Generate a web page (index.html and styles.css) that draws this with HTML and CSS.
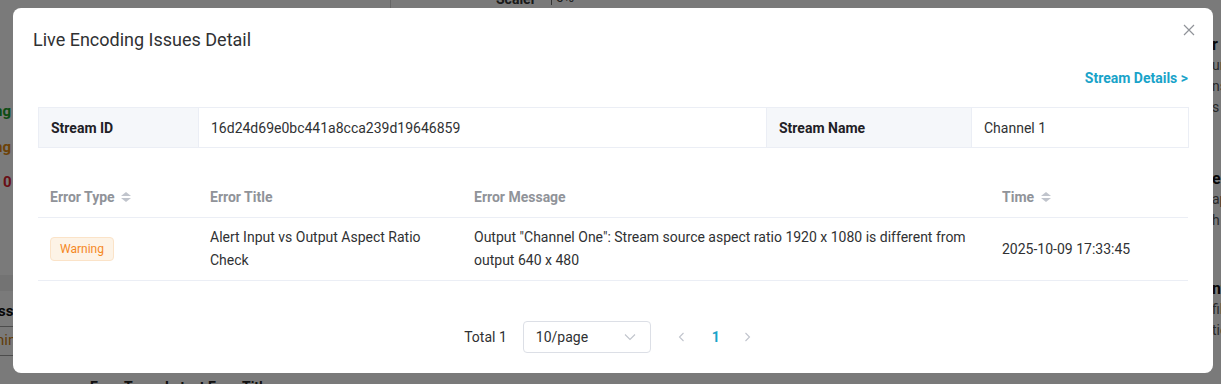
FILE: index.html
```html
<!DOCTYPE html>
<html>
<head>
<meta charset="utf-8">
<link rel="stylesheet" href="styles.css">
</head>
<body>
<div class="page">
  <div class="bg-left">
    <div class="bg-g">ng</div>
    <div class="bg-o">ng</div>
    <div class="bg-r">0</div>
    <div class="bg-band"></div>
    <div class="bg-ss">ss</div>
    <div class="bg-nin">nin</div>
  </div>
  <div class="bg-top"><span class="bg-scaler">Scaler</span><span class="bg-pct">0%</span></div>
  <div class="bg-right">
    <div class="b">r</div><div>ur</div><div>ns</div><div>s</div>
    <div class="b gap">e</div><div>ap</div><div>h</div>
    <div class="b gap2">nt</div><div>fil</div><div>tic</div>
  </div>
  <div class="bg-bottom">Error Type &nbsp; Latest Error Title</div>
</div>
<div class="mask"></div>

<div class="dialog">
  <div class="dialog-header">
    <span class="dialog-title">Live Encoding Issues Detail</span>
    <button class="close" aria-label="Close">
      <svg width="12" height="12" viewBox="0 0 12 12"><path d="M1 1 L11 11 M11 1 L1 11" stroke="#909399" stroke-width="1.2" fill="none"/></svg>
    </button>
  </div>
  <div class="dialog-body">
    <div class="link-row"><a class="details-link">Stream Details &gt;</a></div>
    <table class="info">
      <colgroup><col style="width:160px"><col style="width:568px"><col style="width:205px"><col style="width:217px"></colgroup>
      <tr>
        <td class="label">Stream ID</td>
        <td>16d24d69e0bc441a8cca239d19646859</td>
        <td class="label">Stream Name</td>
        <td>Channel 1</td>
      </tr>
    </table>

    <table class="grid">
      <colgroup><col style="width:160px"><col style="width:264px"><col style="width:528px"><col style="width:198px"></colgroup>
      <thead>
        <tr>
          <th>Error Type <span class="sort"><i class="up"></i><i class="down"></i></span></th>
          <th>Error Title</th>
          <th>Error Message</th>
          <th>Time <span class="sort"><i class="up"></i><i class="down"></i></span></th>
        </tr>
      </thead>
      <tbody>
        <tr>
          <td><span class="tag">Warning</span></td>
          <td>Alert Input vs Output Aspect Ratio Check</td>
          <td>Output "Channel One": Stream source aspect ratio 1920 x 1080 is different from output 640 x 480</td>
          <td>2025-10-09 17:33:45</td>
        </tr>
      </tbody>
    </table>

    <div class="pager">
      <span class="total">Total 1</span>
      <div class="select">
        <span>10/page</span>
        <svg width="12" height="8" viewBox="0 0 12 8"><path d="M1 1.5 L6 6.5 L11 1.5" stroke="#c0c4cc" stroke-width="1.1" fill="none"/></svg>
      </div>
      <span class="nav"><svg width="7" height="10" viewBox="0 0 7 10"><path d="M5.5 1 L1.5 5 L5.5 9" stroke="#c0c4cc" stroke-width="1.1" fill="none"/></svg></span>
      <span class="num">1</span>
      <span class="nav"><svg width="7" height="10" viewBox="0 0 7 10"><path d="M1.5 1 L5.5 5 L1.5 9" stroke="#c0c4cc" stroke-width="1.1" fill="none"/></svg></span>
    </div>
  </div>
</div>
</body>
</html>
```
FILE: styles.css
```css
html, body {
  margin: 0;
  padding: 0;
  width: 1221px;
  height: 384px;
  overflow: hidden;
  font-family: Roboto, "Liberation Sans", sans-serif;
}
.page {
  position: relative;
  width: 1221px;
  height: 384px;
  background: #f4f4f4;
  color: #303133;
  font-size: 14px;
}
.bg-left { position: absolute; left: 0; top: 0; width: 40px; height: 384px; }
.bg-left div { position: absolute; font-weight: bold; font-size: 15px; }
.bg-g { left: -6px; top: 102px; color: #1a9a2a; }
.bg-o { left: -6px; top: 138px; color: #d98410; }
.bg-r { left: 3px; top: 173px; color: #d01c2c; }
.bg-band { left: 0; top: 275px; width: 40px; height: 16px; background: #e6e6e6; }
.bg-ss { left: -2px; top: 302px; color: #111; border-bottom: 1px solid #999; width: 40px; padding-bottom: 6px; }
.bg-nin { left: -4px; top: 331px; color: #c47a12; font-weight: normal !important; border-bottom: 1px solid #999; width: 44px; padding-bottom: 6px; }
.bg-top { position: absolute; left: 390px; top: -9px; width: 700px; height: 18px; border-left: 1px solid #ccc; }
.bg-scaler { position: absolute; left: 105px; font-weight: bold; color: #333; }
.bg-pct { position: absolute; left: 160px; top: -2px; border-left: 1px solid #666; padding-left: 4px; color: #333; }
.bg-right { position: absolute; left: 1212px; top: 34px; font-size: 14px; line-height: 21px; color: #555; }
.bg-right .b { font-weight: bold; color: #111; font-size: 16px; }
.bg-right .gap { margin-top: 50px; }
.bg-right .gap2 { margin-top: 47px; }
.bg-bottom { position: absolute; left: 90px; top: 379px; font-weight: bold; color: #222; }
.mask {
  position: absolute;
  left: 0; top: 0;
  width: 1221px; height: 384px;
  background: rgba(0, 0, 0, 0.5);
}

.dialog {
  position: absolute;
  left: 13px;
  top: 8px;
  width: 1200px;
  height: 365px;
  background: #fff;
  border-radius: 8px;
  box-sizing: border-box;
  color: #303133;
}
.dialog-header {
  display: flex;
  justify-content: space-between;
  align-items: flex-start;
  padding: 20px 16px 0 20px;
}
.dialog-title {
  font-size: 18px;
  line-height: 24px;
  color: #303133;
}
.close {
  border: 0;
  background: none;
  padding: 0;
  margin-top: -6px;
  width: 16px;
  height: 16px;
  display: flex;
  align-items: center;
  justify-content: center;
  cursor: pointer;
}
.dialog-body {
  padding: 0 24px 0 25px;
}
.link-row {
  display: flex;
  justify-content: flex-end;
  margin-top: 16px;
  height: 20px;
  line-height: 20px;
  padding-right: 1px;
}
.details-link {
  color: #19a3c9;
  font-weight: bold;
  font-size: 14px;
  cursor: pointer;
}
.info {
  margin-top: 19px;
  width: 1150px;
  table-layout: fixed;
  border-collapse: collapse;
  font-size: 14px;
}
.info td {
  border: 1px solid #ebeef5;
  height: 40px;
  padding: 0 12px;
  box-sizing: border-box;
  color: #303133;
}
.info td.label {
  background: #f5f7fa;
  font-weight: bold;
  color: #1f2126;
}
.grid {
  margin-top: 29px;
  width: 1150px;
  table-layout: fixed;
  border-collapse: collapse;
  font-size: 14px;
}
.grid th {
  text-align: left;
  color: #909399;
  font-weight: bold;
  height: 40px;
  padding: 0 12px;
  border-bottom: 1px solid #ebeef5;
}
.grid td {
  padding: 8px 12px;
  line-height: 23px;
  border-bottom: 1px solid #ebeef5;
  color: #303133;
  vertical-align: middle;
}
.sort {
  display: inline-flex;
  flex-direction: column;
  gap: 2px;
  vertical-align: middle;
  margin-left: 3px;
  margin-top: -2px;
}
.sort i {
  width: 0; height: 0;
  border-left: 5px solid transparent;
  border-right: 5px solid transparent;
}
.sort .up { border-bottom: 4px solid #c0c4cc; }
.sort .down { border-top: 4px solid #c0c4cc; }
.tag {
  display: inline-flex;
  align-items: center;
  height: 24px;
  padding: 0 9px;
  box-sizing: border-box;
  font-size: 12px;
  color: #f5881f;
  background: #fdf3e6;
  border: 1px solid #fbe3c8;
  border-radius: 4px;
}
.pager {
  display: flex;
  justify-content: center;
  align-items: center;
  margin-top: 40px;
  height: 32px;
  font-size: 14px;
  color: #303133;
  padding-right: 10px;
}
.total { margin-right: 16px; }
.select {
  width: 128px;
  height: 32px;
  box-sizing: border-box;
  border: 1px solid #dcdfe6;
  border-radius: 4px;
  display: flex;
  align-items: center;
  justify-content: space-between;
  padding: 0 14px 0 12px;
  margin-right: 26px;
}
.nav { width: 10px; display: flex; justify-content: center; }
.num {
  color: #19a3c9;
  font-weight: bold;
  margin: 0 23px 0 25px;
}
```
